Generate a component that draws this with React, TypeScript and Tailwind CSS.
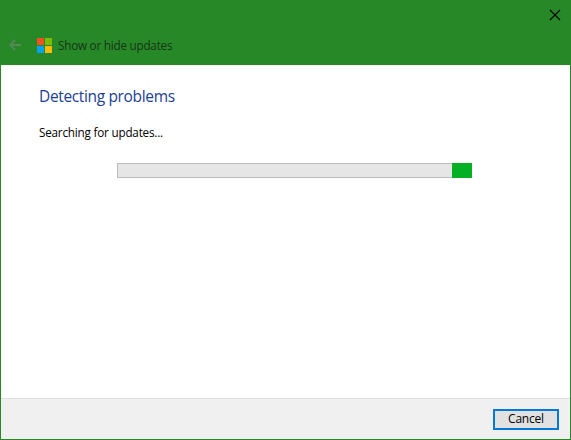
export default function App() {
  return (
    <div className="flex h-[440px] w-[571px] flex-col bg-[#278827] font-['Open_Sans','Noto_Sans',sans-serif] text-[11.7px] tracking-[-0.22px] text-black">
      <header className="flex h-[65px] flex-col">
        <div className="flex h-[30px] items-center justify-end pr-[10px]">
          <svg width="12" height="12" viewBox="0 0 12 12" stroke="#000" strokeWidth="1.1"><path d="M1 1l10 10M11 1L1 11" /></svg>
        </div>
        <div className="flex h-[30px] items-center pl-[9px]">
          <svg width="12" height="12" viewBox="0 0 12 12" fill="none" stroke="#55895a" strokeWidth="1.9"><path d="M12 6H1.5M6 1L1.2 6L6 11" /></svg>
          <div className="ml-4 grid grid-cols-2 gap-px">
            <span className="size-[7px] bg-[#f25022]" />
            <span className="size-[7px] bg-[#7fba00]" />
            <span className="size-[7px] bg-[#00a4ef]" />
            <span className="size-[7px] bg-[#ffb900]" />
          </div>
          <span className="mt-[2px] ml-[6px] whitespace-nowrap text-[#17351a]">Show or hide updates</span>
        </div>
      </header>
      <main className="mx-px flex h-[333px] flex-col bg-white pl-[38px]">
        <h1 className="mt-[19px] h-[24px] text-[15.5px] leading-[24px] tracking-[-0.35px] whitespace-nowrap text-[#1c4094]">Detecting problems</h1>
        <p className="mt-[15px] h-[18px] leading-[18px] tracking-[-0.2px] whitespace-nowrap">Searching for updates...</p>
        <div className="mt-[22px] ml-[78px] flex h-[15px] w-[355px] justify-end border border-[#bcbcbc] bg-[#e6e6e6]">
          <div className="-my-px -mr-px w-[20px] bg-[#06b025]" />
        </div>
      </main>
      <footer className="mx-px mb-px flex h-[41px] items-center justify-end border-t border-[#dfdfdf] bg-[#f0f0f0] pr-[11px]">
        <button className="flex h-[21px] w-[66px] items-center justify-center border-2 border-[#0078d7] bg-[#e1e1e1] text-[12px] tracking-[-0.2px]">Cancel</button>
      </footer>
    </div>
  );
}
